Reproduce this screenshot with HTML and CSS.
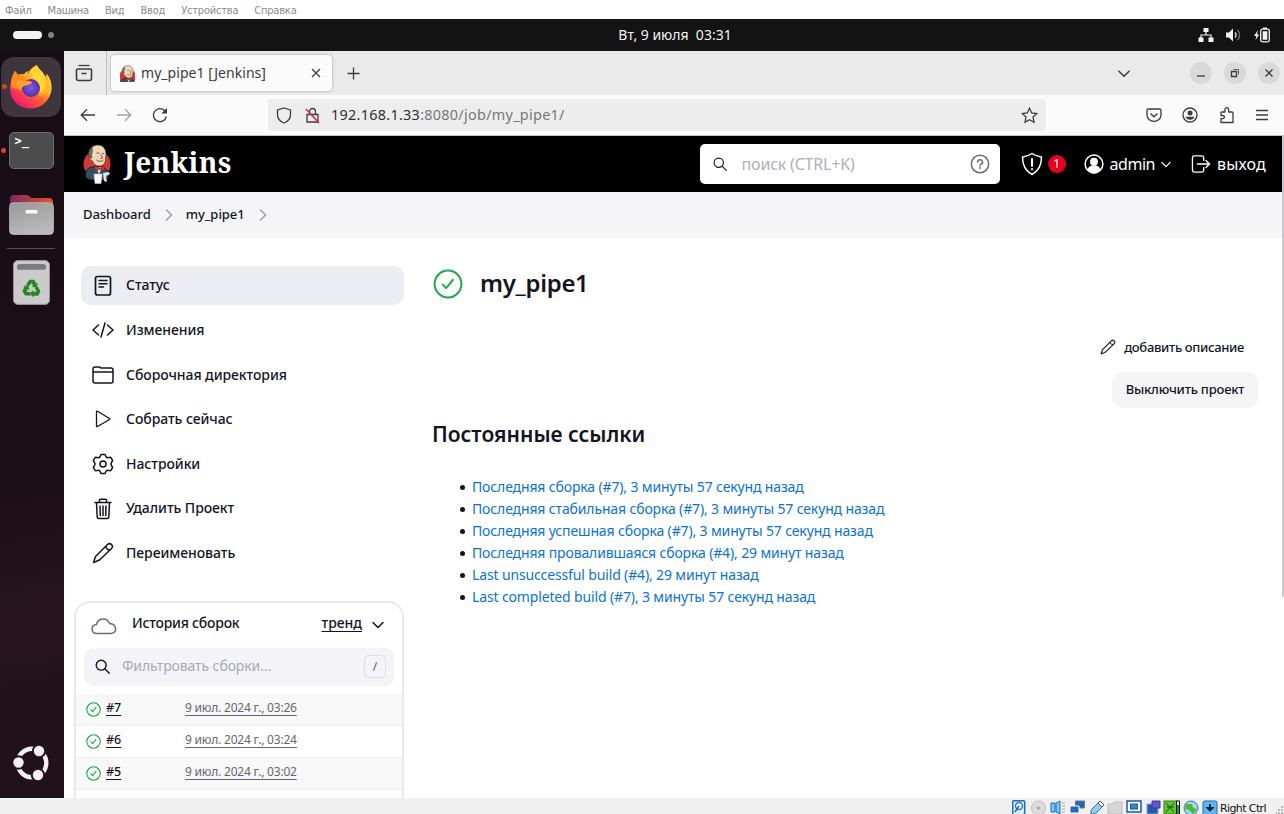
FILE: index.html
```html
<!DOCTYPE html>
<html lang="ru">
<head>
<meta charset="utf-8">
<title>my_pipe1 [Jenkins]</title>
<link rel="stylesheet" href="styles.css">
</head>
<body>
<svg class="sprite" width="0" height="0">
  <symbol id="ok" viewBox="0 0 30 30"><circle cx="15" cy="15" r="13.4" /><path d="M9.8 15.600l3.400 3.500 6.700-8.300" /></symbol>
  <symbol id="pencil" viewBox="0 0 22 22"><path d="M1.500 20.500l2-6L15.500 2.500a2.800 2.800 0 0 1 4 4L7.500 18zM14 4.500q.5 3 3.500 3.500" /></symbol>
  <symbol id="search" viewBox="0 0 16 16"><circle cx="6.600" cy="6.600" r="5.300" /><path d="M10.500 10.500l4.700 4.700" /></symbol>
  <symbol id="chev" viewBox="0 0 12 8"><path d="M1 1.500l5 5 5-5" /></symbol>
  <symbol id="right" viewBox="0 0 8 12"><path d="M1.500 1l5 5-5 5" /></symbol>
  <symbol id="butler" viewBox="0 0 30 40">
    <circle cx="15" cy="20" r="13.500" fill="#d33833" />
    <path d="M4 34c-1-4 0-8 3-10l6-2 7 1 5 3c2 3 2 7 0 9l-4 1H9z" fill="#335061" stroke="#111c24" stroke-width=".8" />
    <path d="M14 23l3 7 3-7z" fill="#eee" />
    <path d="M7 9C8 3 12 1 16 1c5 0 8 4 8 9l-.5 5c0 4-2 7-6 7-4 0-6-2-7-5-3-1-4-4-3.500-8z" fill="#f0d6b7" stroke="#3b312a" stroke-width=".7" />
    <path d="M8 14C5.500 11 6.500 6 10 3l.5 4-1 4 .5 3z" fill="#786b62" stroke="#3b312a" stroke-width=".5" />
    <path d="M14.500 9.500c1-1 2-1 3 0M20 9.500h2M14.500 16c2 1.500 5 2 7 0M19 10.500l1.500 3.500-2 .5" fill="none" stroke="#4a3b30" stroke-width=".8" />
    <path d="M13 22l5 2 4-2 1 5-4-2-6 2z" fill="#d33833" stroke="#681b18" stroke-width=".5" />
    <path d="M12 30h8l-1 9.500h-6z" fill="#fff" stroke="#ccd5dd" stroke-width=".5" />
    <path d="M21 29l6-1 1 2-4 2 1 6-3-1z" fill="#dce4e8" />
  </symbol>
</svg>

<nav class="vm-menu"><span>Файл</span><span>Машина</span><span>Вид</span><span>Ввод</span><span>Устройства</span><span>Справка</span></nav>

<div class="topbar">
  <div class="spaces"><i class="pill"></i><i class="dot"></i></div>
  <div class="clock">Вт, 9 июля&nbsp; 03:31</div>
  <div class="tray">
    <svg width="16" height="14" viewBox="0 0 16 14"><path d="M5.500 0h5v4h-5zM.500 9.500h5V14h-5zM10.500 9.500h5V14h-5z" fill="#f2f2f2" /><path d="M8 4v3M3 10V7h10v3" fill="none" stroke="#f2f2f2" stroke-width="1.200" /></svg>
    <svg width="16" height="14" viewBox="0 0 16 14"><path d="M0 4.500h3L7 .500v13L3 9.500H0z" fill="#f2f2f2" /><path d="M9 4.500a3.500 3.500 0 0 1 0 5" fill="none" stroke="#f2f2f2" stroke-width="1.300" /><path d="M11.500 2a7 7 0 0 1 0 10" fill="none" stroke="#777" stroke-width="1.300" /></svg>
    <svg width="16" height="16" viewBox="0 0 16 16"><path d="M4 3L0 9h2.300L1.500 13 5.300 7.500H3z" fill="#f2f2f2" /><rect x="6.700" y="2.200" width="8.600" height="12.600" rx="1.800" fill="none" stroke="#f2f2f2" stroke-width="1.300" /><path d="M8.700 4.200h4.600v8.600H8.700zM9 .500h4v1.500H9z" fill="#f2f2f2" /></svg>
  </div>
</div>

<div class="desktop">
  <aside class="dock">
    <div class="app firefox">
      <svg width="42" height="44" viewBox="0 0 42 44">
        <defs>
          <linearGradient id="fx" x1=".85" y1=".1" x2=".2" y2=".95"><stop offset="0" stop-color="#fff14a" /><stop offset=".35" stop-color="#ffb52a" /><stop offset=".6" stop-color="#ff5a33" /><stop offset="1" stop-color="#f0157a" /></linearGradient>
          <radialGradient id="fp"><stop offset="0" stop-color="#7c5cf5" /><stop offset="1" stop-color="#56309f" /></radialGradient>
        </defs>
        <path d="M27 0c0 3 6 6 8.500 12 1-.5 1.500-2 1.500-3 6 8 6 18 1 25-4 6-10 9.500-17 9.500C9 43.500 0 35 0 23c0-5 2-9 4-12 0-2 .3-4 1-5l3 3.500c2-.7 4-.7 6-.2 1-2 3-3 5-3.500-1 1-1.500 2-1.500 4C20 4 23 2 27 0z" fill="url(#fx)" />
        <path d="M5 6C1 12 0 18 2 23l6 1 7-6 6-1c-2-2-4-2-6-2-1-1-2-3-2-5l-5 1.500z" fill="#ff8a24" />
        <circle cx="21" cy="23" r="9" fill="url(#fp)" />
        <path d="M7 15c6 1 12 0 15 2 0 3-5 3-8 4-2 1-3 3-3 5-4-2-5-7-4-11z" fill="#ffa02e" />
        <path d="M27 0c-5 4-6 10-3 14 5 3 8 8 5 15 5-3 9-9 6-17C33 6 27 3 27 0z" fill="#ffd52f" />
        <path d="M35.500 12c1 8-1 15-7 19 5 0 9-4 11-8 0-6-1-9-2.500-14z" fill="#ffb52a" />
      </svg>
    </div>
    <div class="app terminal">&gt;_</div>
    <div class="app files">
      <svg width="45" height="41" viewBox="0 0 46 42">
        <defs><linearGradient id="fo"><stop offset="0" stop-color="#7a2b5c" /><stop offset="1" stop-color="#e9542a" /></linearGradient><linearGradient id="fg" x2=".4" y2="1"><stop offset="0" stop-color="#989898" /><stop offset="1" stop-color="#b9b9b9" /></linearGradient></defs>
        <path d="M1 14V5q0-4 4-4h13q2 0 3.500 2l1.500 1h18q4 0 4 4v8z" fill="url(#fo)" />
        <rect x=".5" y="9" width="45" height="32.500" rx="4" fill="url(#fg)" stroke="#c8c8c8" stroke-width=".7" />
        <rect x="17" y="16.500" width="12" height="3.500" rx="1.200" fill="#fff" />
      </svg>
    </div>
    <hr class="dock-rule">
    <div class="app trash">
      <svg width="37" height="45" viewBox="0 0 38 46">
        <rect x=".5" y=".5" width="37" height="45" rx="4.500" fill="#cacaca" stroke="#989898" />
        <rect x="4" y="4" width="30" height="6" rx="3" fill="#7b7b7b" />
        <g fill="#28851f"><g id="arr"><path d="M13.500 25l3.200-4.800h5l2.500 4 1.500-.8-1.500 5-5-1 1.500-1-1.800-3-2.300 3.500z" /></g><use href="#arr" transform="rotate(120 19 29.500)" /><use href="#arr" transform="rotate(240 19 29.500)" /></g>
      </svg>
    </div>
    <div class="app ubuntu">
      <svg width="36" height="36" viewBox="0 0 36 36">
        <circle cx="19" cy="18" r="14.300" fill="none" stroke="#f3f1f2" stroke-width="4.400" />
        <g fill="#f3f1f2" stroke="#22131b" stroke-width="2"><circle cx="5.500" cy="17.500" r="6.200" /><circle cx="26" cy="6" r="6.200" /><circle cx="25" cy="30" r="6.200" /></g>
      </svg>
    </div>
  </aside>

  <main class="browser">
    <div class="tabs">
      <div class="recent"><svg class="ico" width="18" height="18" viewBox="0 0 18 18"><path d="M3.500 1.500h11" /><path d="M2.500 5h13a1 1 0 0 1 1 1v8.500a2 2 0 0 1-2 2h-11a2 2 0 0 1-2-2V6a1 1 0 0 1 1-1zM6.500 9.500h5" stroke-width="1.600" /></svg></div>
      <div class="tab">
        <svg width="15" height="17" viewBox="3 0 24 29" preserveAspectRatio="none"><use href="#butler" width="30" height="40" /></svg>
        <span class="tab-title">my_pipe1 [Jenkins]</span>
        <svg class="ico" width="10" height="10" viewBox="0 0 10 10"><path d="M1 1l8 8M9 1L1 9" /></svg>
      </div>
      <svg class="ico plus" width="13" height="13" viewBox="0 0 13 13"><path d="M6.500.500v12M.500 6.500h12" /></svg>
      <svg class="ico all-tabs" width="14" height="9" viewBox="0 0 12 8"><use href="#chev" /></svg>
      <div class="winbtns">
        <span><svg class="ico" width="10" height="10" viewBox="0 0 10 10"><path d="M1 8h8" /></svg></span>
        <span><svg class="ico" width="10" height="10" viewBox="0 0 10 10"><path d="M1.500 3.500h5v5h-5z" /><path d="M3.500 1.500h5v5" stroke-width=".8" /></svg></span>
        <span><svg class="ico" width="10" height="10" viewBox="0 0 10 10"><path d="M1.500 1.500l7 7M8.500 1.500l-7 7" /></svg></span>
      </div>
    </div>

    <div class="toolbar">
      <svg class="ico" width="16" height="14" viewBox="0 0 16 14"><path d="M15 7H1.500M7 1.200L1.200 7 7 12.800" /></svg>
      <svg class="ico faded" width="16" height="14" viewBox="0 0 16 14"><path d="M1 7h13.500M9 1.200L14.800 7 9 12.800" /></svg>
      <svg class="ico" width="16" height="16" viewBox="0 0 16 16"><path d="M14.300 9.500A6.500 6.500 0 1 1 12.500 3.500L14 5" /><path class="solid" d="M15 .800v5.700H9.300z" /></svg>
      <div class="url">
        <svg class="ico" width="16" height="17" viewBox="0 0 16 17"><path d="M8 1l6.500 2v4.500C14.500 12 12 14.500 8 16c-4-1.500-6.500-4-6.500-8.500V3z" /></svg>
        <svg class="ico lock" width="15" height="17" viewBox="0 0 15 17"><path d="M2 7.500h11V15H2zM4.500 7V4.500a3 3 0 0 1 6 0V7" /><path class="slash" d="M1 2l13 14" /></svg>
        <span class="addr">192.168.1.33<em>:8080/job/my_pipe1/</em></span>
        <svg class="ico" width="17" height="17" viewBox="0 0 17 17"><path d="M8.500 1.300l2.200 4.700 5 .6-3.700 3.500 1 5.100-4.500-2.500L4 15.200l1-5.100L1.300 6.600l5-.6z" /></svg>
      </div>
      <div class="tools">
        <svg class="ico" width="16" height="16" viewBox="0 0 16 16"><path d="M2.500 2h11a1.500 1.500 0 0 1 1.500 1.500V8a7 6.300 0 0 1-14 0V3.500A1.500 1.500 0 0 1 2.500 2zM4.500 6.500L8 9.800l3.500-3.300" /></svg>
        <svg class="ico" width="16" height="16" viewBox="0 0 16 16"><circle cx="8" cy="8" r="7" /><circle class="solid" cx="8" cy="6" r="2.500" /><path class="solid" d="M3.500 9.700h9c-.7 2-2.300 3-4.500 3s-3.800-1-4.500-3z" /></svg>
        <svg class="ico" width="16" height="18" viewBox="0 0 16 18"><path d="M2.500 6H6V3.500a1.800 1.800 0 0 1 3.600 0V6H13a1 1 0 0 1 1 1v9.500H2v-3.800h1.800a1.600 1.600 0 0 0 0-3.200H2V6.500z" stroke-linejoin="round" /></svg>
        <svg class="ico" width="14" height="12" viewBox="0 0 14 12"><path d="M1 1.500h12M1 6h12M1 10.500h12" /></svg>
      </div>
    </div>

    <div class="page">
      <i class="scrollbar"></i>
      <header class="jheader">
        <svg width="30" height="40"><use href="#butler" /></svg>
        <span class="brand">Jenkins</span>
        <div class="jsearch">
          <svg class="line thin" width="14" height="14" viewBox="0 0 16 16"><use href="#search" /></svg>
          <span>поиск (CTRL+K)</span>
          <svg class="line grey" width="20" height="20" viewBox="0 0 20 20"><circle cx="10" cy="10" r="8.700" /><path d="M7.500 8a2.500 2.300 0 1 1 3.500 2.200q-1 .5-1 1.500M10 13.400v1" /></svg>
        </div>
        <svg class="line white shield" width="22" height="24" viewBox="0 0 22 24"><path d="M11 1.500c3 2 5.500 3 9.500 3.500 0 9-3 14-9.500 17.500C4.500 19 1.500 14 1.500 5 5.500 4.500 8 3.500 11 1.500z" /><path d="M11 7v7M11 17v.3" stroke-width="2" /></svg>
        <b class="badge">1</b>
        <svg class="line white" width="20" height="20" viewBox="0 0 20 20"><circle cx="10" cy="10" r="8.900" /><circle cx="10" cy="7.800" r="3.200" fill="#fff" /><path d="M4 16c1-3 3-4 6-4s5 1 6 4c-3 3.500-9 3.500-12 0z" fill="#fff" /></svg>
        <span class="user">admin</span>
        <svg class="line white" width="10" height="7" viewBox="0 0 12 8"><use href="#chev" /></svg>
        <svg class="line white exit" width="20" height="18" viewBox="0 0 21 20"><path d="M13.500 6V3q0-2-2-2H3Q1 1 1 3v14q0 2 2 2h8.500q2 0 2-2v-3M6.500 10h13M16 6l4 4-4 4" /></svg>
        <span class="logout">выход</span>
      </header>

      <div class="crumbs"><span>Dashboard</span><svg class="line crumb" width="8" height="12"><use href="#right" /></svg><span>my_pipe1</span><svg class="line crumb" width="8" height="12"><use href="#right" /></svg></div>

      <div class="content">
        <section class="side">
          <nav class="tasks">
            <a class="active"><svg class="line" width="22" height="22" viewBox="0 0 22 22"><rect x="3.500" y="1.500" width="15" height="18.500" rx="2" stroke-width="1.700" /><path d="M7 5.500h8M7 8.700h8M7 12h4.500" /></svg><span>Статус</span></a>
            <a><svg class="line" width="22" height="22" viewBox="0 0 22 22"><path d="M6.500 6L1 11l5.500 5M15.500 6l5.500 5-5.500 5M13 4L9 18" /></svg><span>Изменения</span></a>
            <a><svg class="line" width="22" height="22" viewBox="0 0 22 22"><path d="M1 8.500V5q0-2 2-2h4q1 0 2 1h10q2 0 2 2v11q0 2-2 2H3q-2 0-2-2V8h20" /></svg><span>Сборочная директория</span></a>
            <a><svg class="line thin" width="22" height="22" viewBox="0 0 22 22"><path d="M4.500 4v14q0 1 1 .500L17.500 11.500q.5-.5 0-1L5.500 3.300q-1-.5-1 .7z" /></svg><span>Собрать сейчас</span></a>
            <a><svg class="line" width="22" height="22" viewBox="0 0 22 22"><circle cx="11" cy="11" r="3" /><path d="M9 1.500h4l1 2.200q1 1.300 3 .8l1.700-.2 2 3.300-1 1.400q-1.400 2 0 4l1 1.400-2 3.300-1.700-.2q-2-.5-3 .8l-1 2.200H9l-1-2.200q-1-1.300-3-.8l-1.700.2-2-3.300 1-1.400q1.400-2 0-4l-1-1.400 2-3.300 1.700.2q2 .5 3-.8z" /></svg><span>Настройки</span></a>
            <a><svg class="line" width="22" height="22" viewBox="0 0 22 22"><path d="M3 4.500h16M7.500 4V2q0-.8 1-.8h5q1 0 1 .8v2M4.500 5l.7 14q.1 1.500 1.600 1.500h8.400q1.500 0 1.600-1.500l.7-14M8 8l.3 9.500M11 8v9.500M14 8l-.3 9.500" /></svg><span>Удалить Проект</span></a>
            <a><svg class="line" width="22" height="22"><use href="#pencil" /></svg><span>Переименовать</span></a>
          </nav>

          <div class="history">
            <div class="hist-head">
              <svg class="line cloud" width="26" height="18" viewBox="0 0 26 18"><path d="M6 16.500C-.5 16.500-.5 8 5.500 7.500 7 .5 16 0 18.500 6.500c8 .5 8 10 1 10z" /></svg>
              <span class="hist-title">История сборок</span>
              <a class="trend">тренд</a>
              <svg class="line" width="12" height="8"><use href="#chev" /></svg>
            </div>
            <div class="filter"><svg class="line" width="15" height="15" viewBox="0 0 16 16"><use href="#search" /></svg><span>Фильтровать сборки...</span><kbd>/</kbd></div>
            <div class="build odd"><svg class="line green" width="15" height="15"><use href="#ok" stroke-width="2.200" /></svg><a>#7</a><time>9 июл. 2024 г., 03:26</time></div>
            <div class="build"><svg class="line green" width="15" height="15"><use href="#ok" stroke-width="2.200" /></svg><a>#6</a><time>9 июл. 2024 г., 03:24</time></div>
            <div class="build odd"><svg class="line green" width="15" height="15"><use href="#ok" stroke-width="2.200" /></svg><a>#5</a><time>9 июл. 2024 г., 03:02</time></div>
          </div>
        </section>

        <section class="main">
          <div class="title"><svg class="line green" width="30" height="30"><use href="#ok" stroke-width="2" /></svg><h1>my_pipe1</h1></div>
          <div class="describe"><svg class="line" width="16" height="16" viewBox="0 0 22 22"><use href="#pencil" /></svg><span>добавить описание</span></div>
          <button class="disable"><span>Выключить проект</span></button>
          <h2>Постоянные ссылки</h2>
          <ul class="links">
            <li><a>Последняя сборка (#7), 3 минуты 57 секунд назад</a></li>
            <li><a>Последняя стабильная сборка (#7), 3 минуты 57 секунд назад</a></li>
            <li><a>Последняя успешная сборка (#7), 3 минуты 57 секунд назад</a></li>
            <li><a>Последняя провалившаяся сборка (#4), 29 минут назад</a></li>
            <li><a>Last unsuccessful build (#4), 29 минут назад</a></li>
            <li><a>Last completed build (#7), 3 минуты 57 секунд назад</a></li>
          </ul>
        </section>
      </div>
    </div>
  </main>
</div>

<footer class="vm-status">
  <svg width="206" height="14" viewBox="0 0 206 14">
    <g><rect x=".7" y=".7" width="12" height="14" rx="1.500" fill="#d8efff" stroke="#1a6fb8" stroke-width="1.500" /><circle cx="7" cy="6" r="3.500" fill="#fff" stroke="#2b7cc0" stroke-width="1.500" /><path d="M7 6l-4 6" stroke="#1b5f9e" stroke-width="1.500" /></g>
    <g><circle cx="26.500" cy="8" r="7" fill="#dcdcdc" stroke="#bdbdbd" /><circle cx="26.500" cy="8" r="1.800" fill="#aaa" /></g>
    <path d="M39 3h4v9h-4zM44 3l4-2v13l-4-2z" fill="#7cc6f2" stroke="#1a6fb8" /><path d="M50 3h3M50 6h3M50 9h3M50 12h3" stroke="#aaa" />
    <path d="M63.500 1h9v7h-9z" fill="#2365b8" stroke="#777" /><path d="M58 6h9v7h-9z" fill="#2365b8" stroke="#fff" />
    <path d="M79 10l7-7 4 4-7 7h-4z" fill="#8fcdf0" stroke="#2d78b5" /><path d="M86 3l2-2 4 4-2 2z" fill="#fff" stroke="#555" />
    <path d="M96 14V4h5l1-2h8v12z" fill="#d6d6d6" stroke="#bbb" />
    <rect x="115" y="1" width="14" height="11" fill="#fff" stroke="#1758a8" stroke-width="1.500" /><rect x="118.500" y="4" width="7" height="5" fill="#3a84d0" stroke="#1758a8" />
    <path d="M135 4h11v10h-11z" fill="#2458a8" stroke="#8fa8c8" /><path d="M140 1h8v7h-8z" fill="#6557cf" stroke="#4034a0" />
    <rect x="152" y="1" width="13" height="13" fill="#62c52a" stroke="#27820e" /><path d="M154 3l8 9M162 3l-8 9M155 7h7" stroke="#145507" /><path d="M164.500 1h3v13h-3z" fill="#fff" stroke="#000" /><path d="M166 5v9" stroke="#16a022" stroke-width="2" />
    <circle cx="179" cy="8" r="7" fill="#9bd4f5" stroke="#397aa8" /><path d="M174 4l6 0 1 4 4 1-4 5-4-4-4-1z" fill="#4fb832" />
    <rect x="191" y="1" width="14" height="14" rx="1.500" fill="#5eb6ee" stroke="#236ba9" /><path d="M198 4v3M195.500 8h5l-2.500 2.500z" fill="#123" stroke="#123" stroke-width="1.800" />
  </svg>
  <span>Right Ctrl</span>
  <svg class="grip" width="8" height="8" viewBox="0 0 8 8"><path d="M5 0h2v2H5zM2 3h2v2H2zM5 3h2v2H5zM0 6h1v2H0zM2 6h2v2H2zM5 6h2v2H5z" fill="#b8b8b8" /></svg>
</footer>
</body>
</html>
```

FILE: styles.css
```css
* { box-sizing: border-box; }
body { margin: 0; width: 1284px; height: 814px; overflow: hidden; display: flex; flex-direction: column; font-family: "Noto Sans", sans-serif; color: #14141f; background: #fff; white-space: nowrap; }
svg { flex: none; display: block; }
.sprite { position: absolute; }
.ico { fill: none; stroke: #3c3c40; stroke-width: 1.3; }
.line { fill: none; stroke: #14141f; stroke-width: 1.5; stroke-linecap: round; stroke-linejoin: round; }
.thin { stroke-width: 1.3; }
.white { stroke: #fff; }
.green { stroke: #1ea64b; }
.solid { fill: #3c3c40; stroke: none; }

.vm-menu { height: 19px; flex: none; display: flex; gap: 16px; padding: 4px 5px 0; font: 11px/13px "DejaVu Sans Condensed", "DejaVu Sans", sans-serif; font-stretch: condensed; letter-spacing: -.2px; color: #8b8b8b; }

.topbar { height: 32px; flex: none; display: grid; grid-template-columns: 1fr auto 1fr; align-items: center; background: #131313; color: #f2f2f2; }
.spaces { display: flex; align-items: center; gap: 6px; padding-left: 13px; }
.pill { width: 29px; height: 8px; border-radius: 4px; background: #f2f2f2; }
.dot { width: 6px; height: 6px; border-radius: 3px; background: #828282; }
.clock { font-size: 14px; padding: 0 0 2px 66px; }
.tray { display: flex; justify-content: flex-end; align-items: center; gap: 12px; padding-right: 14px; }

.desktop { flex: 1; min-height: 0; display: flex; }
.dock { width: 64px; flex: none; display: flex; flex-direction: column; align-items: center; padding: 6px 2px 0; background: linear-gradient(170deg, #190d15, #1b0e17 55%, #28141f 78%, #211219 85%, #211219); }
.app { flex: none; position: relative; display: flex; align-items: center; justify-content: center; }
.firefox { width: 60px; height: 60px; border-radius: 13px; background: #3f363d; margin-left: -2px; }
.firefox::before, .terminal::before { content: ""; position: absolute; left: 1px; top: 27px; width: 5px; height: 5px; border-radius: 50%; background: #cf4a20; }
.terminal { width: 45px; height: 37px; margin: 15px 2px 0 0; border: 1px solid #6f6f6f; border-radius: 5px; background: #4c4c4c; color: #fff; font: bold 12px/13px "DejaVu Sans Mono", monospace; justify-content: flex-start; align-items: flex-start; padding: 2px 5px; }
.terminal::before { left: -9px; top: 15px; }
.files { margin: 25px 2px 0 0; }
.dock-rule { width: 48px; height: 1px; border: 0; background: #574d54; margin: 13px 2px 11px 0; }
.trash { margin-right: 2px; }
.ubuntu { margin: auto 2px 17px 0; }

.browser { flex: 1; min-width: 0; display: flex; flex-direction: column; }
.tabs { height: 44px; flex: none; display: flex; align-items: center; background: #eaeaea; }
.recent { width: 43px; height: 44px; border-right: 1px solid #bcbcbc; display: flex; align-items: center; padding-left: 11px; }
.tab { width: 221px; height: 36px; margin-left: 4px; border-radius: 4px; background: #fbfbfb; box-shadow: 0 0 3px #999; display: flex; align-items: center; padding: 0 11px 0 9px; }
.tab-title { flex: 1; padding: 0 0 2px 6px; font-size: 14px; letter-spacing: .05px; color: #3c3c40; }
.plus { margin-left: 15px; }
.all-tabs { margin-left: auto; }
.winbtns { display: flex; gap: 12px; margin: 0 4px 0 59px; }
.winbtns span { width: 22px; height: 22px; border-radius: 50%; background: #d9d9d9; display: flex; align-items: center; justify-content: center; }
.toolbar { height: 41px; flex: none; display: flex; align-items: center; gap: 20px; padding: 0 15px 0 16px; background: #fbfbfb; border-bottom: 1px solid #c3c8c4; }
.faded { opacity: .45; }
.url { width: 778px; height: 32px; margin-left: 80px; border-radius: 4px; background: #ededed; display: flex; align-items: center; padding: 0 8px; }
.lock { margin-left: 13px; }
.slash { stroke: #d8264d; stroke-width: 1.6; }
.addr { flex: 1; padding: 0 0 2px 11px; font-size: 14.4px; letter-spacing: .29px; color: #303033; }
.addr em { font-style: normal; color: #777; }
.tools { flex: 1; display: flex; align-items: center; justify-content: space-between; padding-left: 80px; }

.page { flex: 1; min-height: 0; position: relative; display: flex; flex-direction: column; background: #fff; overflow: hidden; }
.scrollbar { position: absolute; right: 0; top: 0; width: 2px; height: 461px; background: #c9c9cb; }
.jheader { height: 56px; flex: none; display: flex; align-items: center; padding: 0 18px; background: #000; color: #fff; font-size: 16px; }
.brand { font: bold 28px/40px "Noto Serif", "DejaVu Serif", serif; letter-spacing: .25px; margin: -4px auto 0 12px; }
.jsearch { width: 300px; height: 40px; border-radius: 5px; background: #fff; color: #adb0bd; display: flex; align-items: center; padding: 0 10px 0 13px; }
.jsearch span { flex: 1; padding-left: 15px; letter-spacing: -.2px; }
.grey { stroke: #6b6b80; }
.shield { margin-left: 21px; }
.badge { width: 18px; height: 18px; border-radius: 50%; margin: 0 18px 0 5px; background: #e6001f; font: 12px/18px "Noto Sans", sans-serif; text-align: center; }
.user { padding: 0 6px; letter-spacing: -.5px; }
.exit { margin-left: 20px; }
.logout { margin-left: 6px; letter-spacing: .2px; }
.crumbs { height: 46px; flex: none; display: flex; align-items: center; background: #f5f5f8; font-size: 13px; font-weight: 500; letter-spacing: -.05px; padding-left: 19px; }
.crumbs span { padding-bottom: 2px; }
.crumb { stroke: #9a9aa8; margin: 0 13px 0 14px; }

.content { flex: 1; min-height: 0; display: flex; }
.side { width: 340px; flex: none; padding: 28px 0 0 10px; }
.tasks { display: flex; flex-direction: column; gap: 5.65px; padding-left: 7px; }
.tasks a { height: 39px; border-radius: 10px; padding-left: 11px; display: flex; align-items: center; gap: 12px; font-size: 14px; font-weight: 500; letter-spacing: -.07px; }
.tasks span { padding-bottom: 1.5px; }
.tasks .active { background: #ecedf3; }
.history { margin-top: 28px; height: 230px; border: 2px solid #e9e9ef; border-radius: 16px 16px 0 0; }
.hist-head { height: 45px; display: flex; align-items: center; padding: 0 18px 0 15px; font-size: 14px; font-weight: 500; letter-spacing: -.25px; }
.cloud { stroke: #6b6b80; margin-top: 1px; }
.hist-title { flex: 1; padding: 0 0 5px 15px; }
.trend, .build a, .build time { text-decoration: underline; text-underline-offset: 3px; }
.trend { margin-right: 10px; padding-bottom: 5px; letter-spacing: 0; }
.filter { height: 38px; margin: 0 8px 8px; border-radius: 9px; background: #f3f3f8; color: #a9a9b8; display: flex; align-items: center; padding: 0 8px 0 11px; font-size: 14px; letter-spacing: -.1px; }
.filter span { flex: 1; padding: 0 0 2px 12px; }
.filter kbd { width: 22px; height: 23px; border: 1px solid #dedee8; border-radius: 4px; color: #60606c; font: 12px/21px "Noto Sans", sans-serif; text-align: center; }
.build { height: 32px; display: flex; align-items: center; padding: 0 0 4px 10px; font-size: 12.5px; border-bottom: 1px solid #eee; }
.build svg { margin-top: 4px; }
.odd { background: #f8f8f8; }
.build a { width: 84px; padding-left: 5px; font-weight: 500; }
.build time { color: #666670; font-size: 12px; letter-spacing: -.2px; }

.main { flex: 1; padding: 31px 26px 0 29px; display: flex; flex-direction: column; }
.title { display: flex; align-items: center; gap: 17px; height: 30px; }
h1 { margin: -2px 0 0; font-size: 24px; line-height: 30px; font-weight: 600; letter-spacing: -.3px; }
.describe { align-self: flex-end; display: flex; align-items: center; gap: 8px; height: 20px; margin: 38px 14px 0 0; font-size: 13px; font-weight: 500; letter-spacing: -.33px; }
.disable { align-self: flex-end; width: 146px; height: 36px; margin: 15px 0 0; border: 0; border-radius: 10px; background: #f5f5f8; font: 500 13px "Noto Sans", sans-serif; letter-spacing: -.2px; color: #14141f; padding: 0 0 2px; }
h2 { margin: 11px 0 0 -1px; font-size: 21px; line-height: 30px; font-weight: 600; }
.links { margin: 27px 0 0; padding-left: 27px; list-style: none; font-size: 14px; line-height: 22px; letter-spacing: -.14px; }
.links li { display: flex; align-items: center; gap: 7px; }
.links li::before { content: ""; width: 5px; height: 5px; margin-top: 1px; border-radius: 50%; background: #14141f; }
.links a { color: #0b72d4; }

.vm-status { height: 16px; flex: none; display: flex; align-items: flex-start; justify-content: flex-end; padding: 2px 0 0 0; background: #f0f0f0; font: 11px/17px "DejaVu Sans", sans-serif; overflow: hidden; color: #111; }
.vm-status span { margin: 0 10px 0 2px; letter-spacing: -.6px; }
.grip { margin-top: 6px; }
```
